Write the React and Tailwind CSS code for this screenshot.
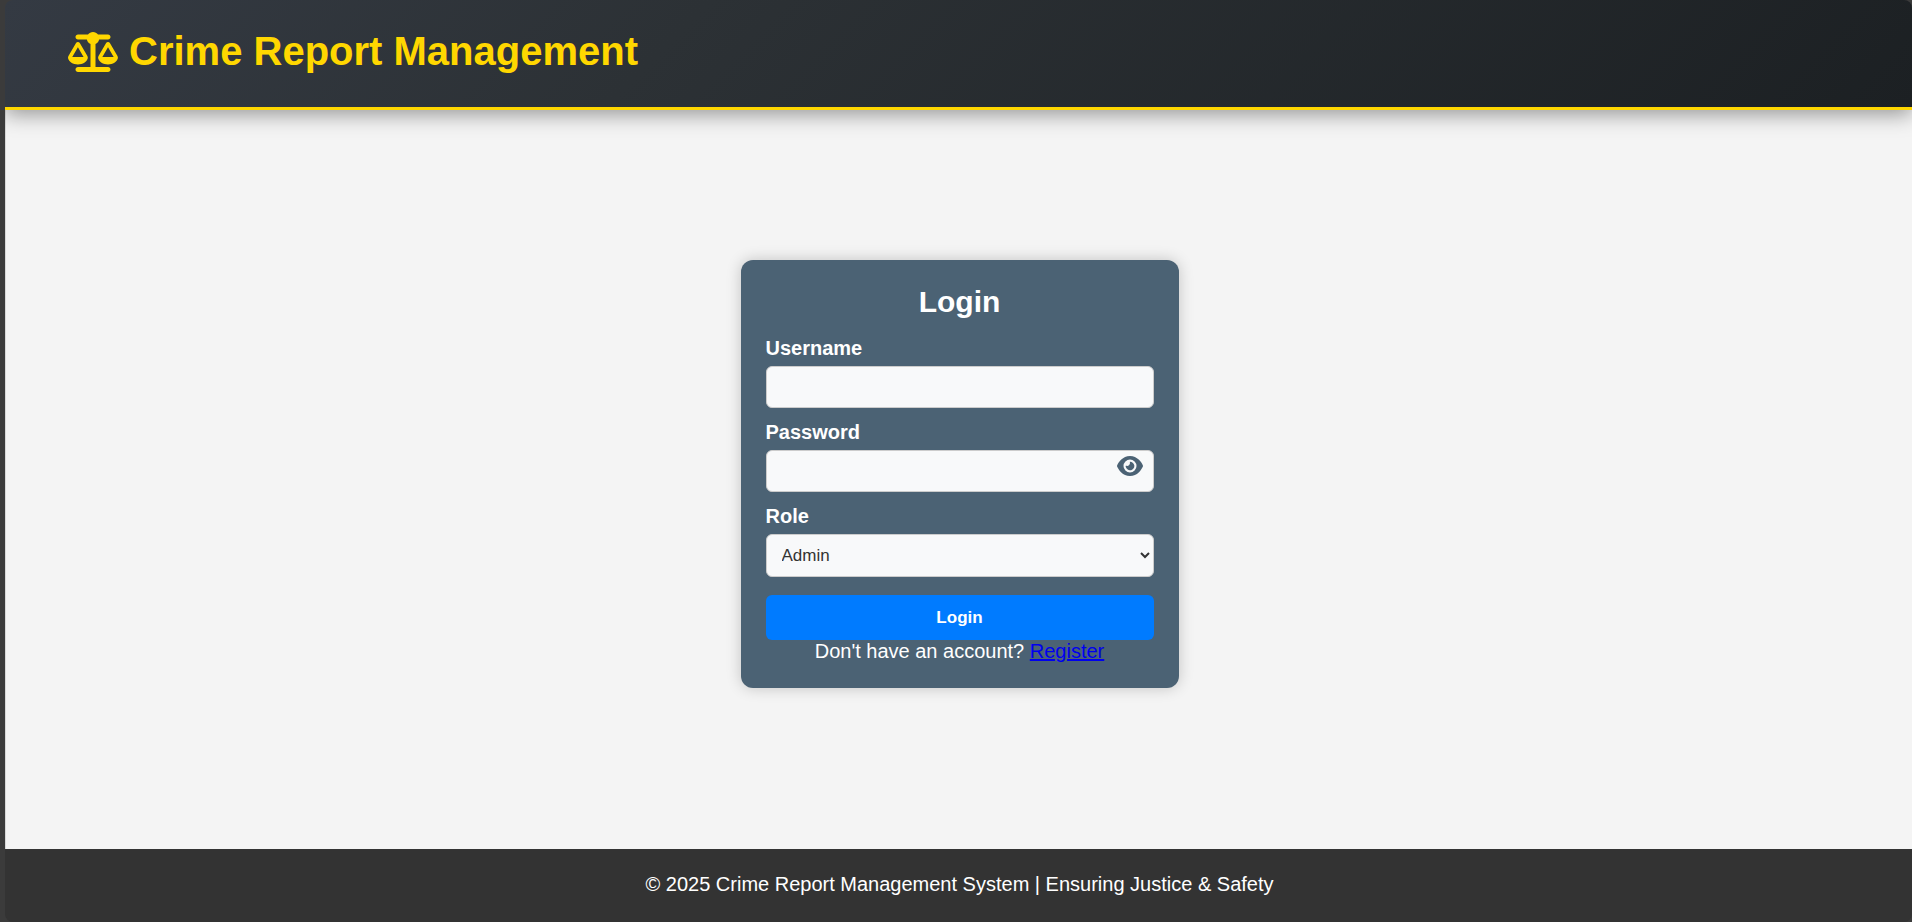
import { useState } from "react";
import { FaScaleBalanced, FaEye } from "react-icons/fa6";

const fieldClass =
  "block w-full rounded-[6px] border border-[#cccccc] bg-[#f8f9fa] text-[17px] text-[#333333]";
const labelClass = "mb-[6px] block text-[20px] leading-[23px] font-bold";

export default function App() {
  const [visible, setVisible] = useState(false);
  return (
    <div className="min-h-screen bg-[#3b3b3b] pl-[5px] font-['Liberation_Sans',Arial,sans-serif]">
      <div className="flex min-h-screen flex-col overflow-hidden rounded-lg">
        <header className="relative border-b-[3px] border-[#ffd700] bg-[linear-gradient(135deg,#343a43,#2c3135_35%,#1c2023)] px-[63px] pt-[28px] pb-[32px] shadow-[0_4px_20px_rgba(0,0,0,0.4)]">
          <h1 className="flex items-center gap-[11px] text-[40px] leading-[47px] font-bold text-[#ffd700]">
            <FaScaleBalanced className="h-[40px] w-[50px]" aria-hidden="true" />
            Crime Report Management
          </h1>
        </header>

        <main className="flex grow items-center justify-center border-l border-[#d8d8d8] bg-[#f4f4f4] pb-[11px] pl-px">
          <form
            className="w-[438px] rounded-xl bg-[#4b6274] p-[25px] text-white shadow-[0_0_15px_rgba(0,0,0,0.2)]"
            onSubmit={(e) => e.preventDefault()}
          >
            <h2 className="mb-[18px] text-center text-[30px] leading-[34px] font-bold">Login</h2>

            <div className="mb-[13px]">
              <label htmlFor="username" className={labelClass}>Username</label>
              <input id="username" type="text" className={`${fieldClass} h-[42px] px-3`} />
            </div>

            <div className="mb-[13px]">
              <label htmlFor="password" className={labelClass}>Password</label>
              <div className="relative">
                <input
                  id="password"
                  type={visible ? "text" : "password"}
                  className={`${fieldClass} h-[42px] pr-12 pl-3`}
                />
                <button
                  type="button"
                  aria-label="Show password"
                  onClick={() => setVisible(!visible)}
                  className="absolute top-1 right-[11px] text-[#4b6274]"
                >
                  <FaEye className="h-6 w-[26px]" />
                </button>
              </div>
            </div>

            <div className="mb-[18px]">
              <label htmlFor="role" className={labelClass}>Role</label>
              <select id="role" className={`${fieldClass} h-[43px] pl-[11px]`}>
                <option>Admin</option>
                <option>Officer</option>
                <option>User</option>
              </select>
            </div>

            <button
              type="submit"
              className="block h-[45px] w-full rounded-[6px] bg-[#007bff] text-[17px] font-bold"
            >
              Login
            </button>
            <p className="text-center text-[20px] leading-[23px]">
              Don't have an account?{" "}
              <a href="#register" className="text-[#0000ee] underline">Register</a>
            </p>
          </form>
        </main>

        <footer className="bg-[#333333] pt-[24px] pb-[26px] pl-[2px] text-center text-[20px] leading-[23px] text-white">
          © 2025 Crime Report Management System | Ensuring Justice &amp; Safety
        </footer>
      </div>
    </div>
  );
}
